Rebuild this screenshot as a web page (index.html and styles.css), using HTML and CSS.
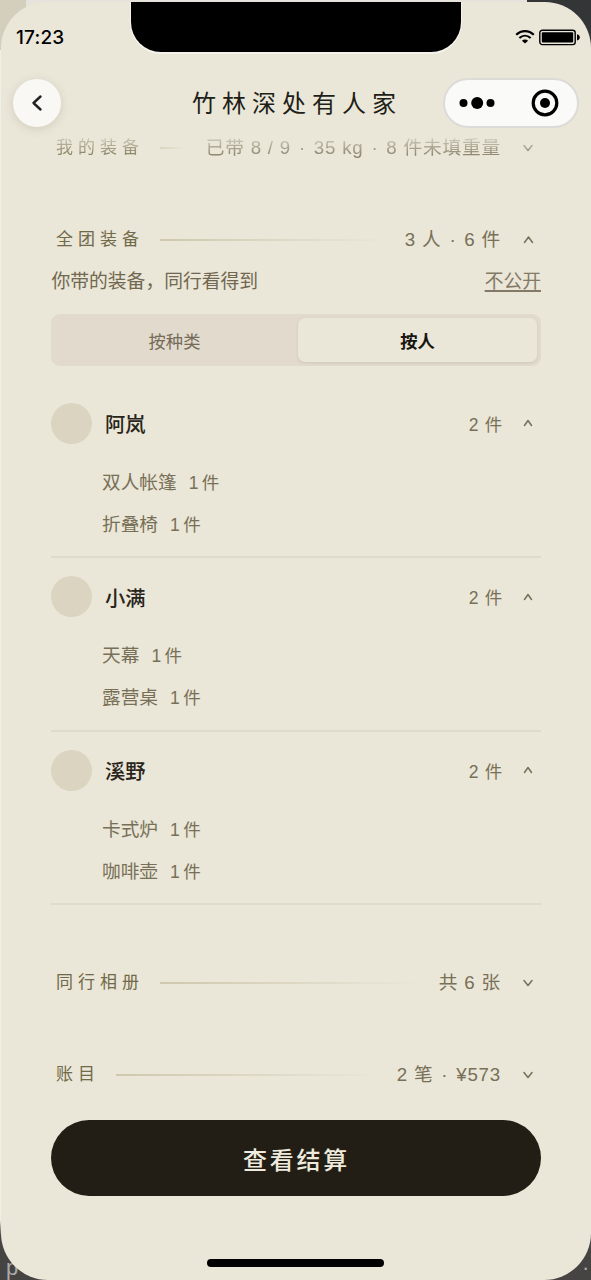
FILE: index.html
```html
<!DOCTYPE html>
<html lang="zh-CN">
<head>
<meta charset="utf-8">
<title>竹林深处有人家</title>
<link rel="stylesheet" href="styles.css">
</head>
<body>
<div class="backdrop-top"></div>
<span class="backdrop-text backdrop-name">小满</span>
<span class="backdrop-text backdrop-left">p</span>
<span class="backdrop-text backdrop-right">·</span>
<main class="phone">
  <div class="notch"></div>
  <header class="header">
    <div class="status">
      <span class="time">17:23</span>
      <span class="status-icons">
        <svg width="20" height="16" viewBox="0 0 20 16" fill="none" stroke="#000" stroke-width="2.2"><path d="M1.2 5.7C6.3.8 13.7.8 18.8 5.7"/><path d="M4.4 9c3.3-3 7.9-3 11.2 0"/><path d="M10 14.6 6.9 11.7c1.8-1.6 4.4-1.6 6.2 0z" fill="#000" stroke="none"/></svg>
        <svg width="42" height="17" viewBox="0 0 42 17"><rect x=".8" y="1.2" width="35.4" height="14.4" rx="2.6" fill="none" stroke="#000" stroke-width="1.4"/><rect x="2.8" y="3.2" width="31.4" height="10.4" rx="1" fill="#000"/><path d="M38 5.3c3.8 1 3.8 5.2 0 6.2z" fill="#000"/></svg>
      </span>
    </div>
    <div class="nav">
      <button class="back"><svg width="12" height="18" viewBox="0 0 12 18" fill="none" stroke="#222" stroke-width="2.4" stroke-linecap="round" stroke-linejoin="round"><path d="M9.500 2.500 2.500 9l7 6.500"/></svg></button>
      <h1 class="title">竹林深处有人家</h1>
      <div class="capsule">
        <svg width="134" height="48" viewBox="0 0 134 48"><circle cx="21.500" cy="24" r="4"/><circle cx="35.200" cy="24" r="6"/><circle cx="48.500" cy="24" r="4"/><circle cx="103" cy="24" r="11.800" fill="none" stroke="#000" stroke-width="3.200"/><circle cx="103" cy="24" r="5"/></svg>
      </div>
    </div>
  </header>
  <div class="content">
    <section class="row mine"><h2>我的装备</h2><i class="rule"></i><span class="value">已带 8 / 9 <span class="dot">·</span> 35 kg <span class="dot">·</span> 8 件未填重量</span><svg class="chev" viewBox="0 0 12 12"><path d="m2 3.500 4 5 4-5"/></svg></section>
    <section class="row group"><h2>全团装备</h2><i class="rule"></i><span class="value">3 人 <span class="dot">·</span> 6 件</span><svg class="chev" viewBox="0 0 12 12"><path d="m2.500 8.500 4-5.500 4 5.500"/></svg></section>
    <div class="note"><span>你带的装备，同行看得到</span><a class="private">不公开</a></div>
    <div class="tabs"><span class="tab">按种类</span><span class="tab active">按人</span></div>
    <section class="person">
      <div class="person-head"><i class="avatar"></i><b>阿岚</b><span class="count">2 件</span><svg class="chev small" viewBox="0 0 12 12"><path d="m2.500 8.500 3.500-5 3.500 5"/></svg></div>
      <div class="item">双人帐篷<small>1 件</small></div>
      <div class="item">折叠椅<small>1 件</small></div>
    </section>
    <section class="person">
      <div class="person-head"><i class="avatar"></i><b>小满</b><span class="count">2 件</span><svg class="chev small" viewBox="0 0 12 12"><path d="m2.500 8.500 3.500-5 3.500 5"/></svg></div>
      <div class="item">天幕<small>1 件</small></div>
      <div class="item">露营桌<small>1 件</small></div>
    </section>
    <section class="person">
      <div class="person-head"><i class="avatar"></i><b>溪野</b><span class="count">2 件</span><svg class="chev small" viewBox="0 0 12 12"><path d="m2.500 8.500 3.500-5 3.500 5"/></svg></div>
      <div class="item">卡式炉<small>1 件</small></div>
      <div class="item">咖啡壶<small>1 件</small></div>
    </section>
    <section class="row album"><h2>同行相册</h2><i class="rule"></i><span class="value">共 6 张</span><svg class="chev" viewBox="0 0 12 12"><path d="m2 3.500 4 5 4-5"/></svg></section>
    <section class="row bill"><h2>账目</h2><i class="rule"></i><span class="value">2 笔 <span class="dot">·</span> ¥573</span><svg class="chev" viewBox="0 0 12 12"><path d="m2 3.500 4 5 4-5"/></svg></section>
    <button class="settle">查看结算</button>
  </div>
  <div class="home"></div>
</main>
</body>
</html>
```
FILE: styles.css
```css
* { box-sizing: border-box; }
body {
  margin: 0;
  width: 591px;
  height: 1280px;
  padding: 2px 0 0 1px;
  position: relative;
  overflow: hidden;
  background: linear-gradient(#343537 0 50px, #f1efe6 50px 1220px, #454443 1236px);
  font-family: "Liberation Sans", "Noto Sans CJK SC", sans-serif;
}
.backdrop-top {
  position: absolute;
  left: 0;
  top: 0;
  width: 527px;
  height: 50px;
  background: linear-gradient(90deg, #d4cebd 0 26px, #e5e3dc 26px);
}
.backdrop-text { position: absolute; color: #aaa; font: 22px/26px "Liberation Sans", "Noto Sans CJK SC", sans-serif; }
.backdrop-name { left: 46px; top: -21px; font-size: 17px; color: #57534a; }
.backdrop-left { left: 6px; top: 1255px; }
.backdrop-right { left: 582px; top: 1255px; }
.phone {
  position: relative;
  width: 590px;
  height: 1278px;
  border-radius: 46px 46px 47px 47px;
  background: #eae6d8;
  overflow: hidden;
}
.notch {
  position: absolute;
  left: 130px;
  top: 0;
  width: 330px;
  height: 50px;
  border-radius: 0 0 30px 30px;
  background: #000;
  box-shadow: 0 1px 0 1px #f5f3ec;
}
.header { height: 131px; }
.status { height: 70px; padding: 0 10px 0 15px; display: flex; align-items: center; justify-content: space-between; }
.time { font: 500 19px/24px Inter, sans-serif; letter-spacing: .2px; padding-top: 1px; }
.status-icons { display: flex; align-items: center; gap: 4px; }
.nav { height: 62px; padding: 0 11px 0 12px; display: flex; align-items: center; }
.back { width: 48px; height: 48px; border: 0; border-radius: 50%; background: #f9f8f5; display: grid; place-items: center; box-shadow: 0 2px 9px #918a7040; padding: 0; }
.title { margin: 0 0 0 131px; padding-top: 1px; width: 251px; font-size: 24px; line-height: 34px; font-weight: 400; letter-spacing: 6px; color: #211e17; white-space: nowrap; }
.capsule { width: 136px; height: 50px; border: 2px solid #dcdbd8; border-radius: 25px; background: #fafaf8; flex: none; }
.capsule svg { display: block; margin-left: -3px; margin-top: -1px; }
.content { padding: 0 50px; }
.row { display: flex; align-items: center; height: 30px; padding: 0 7px 0 5px; color: #777057; }
.row h2 { margin: 0; font-size: 17px; line-height: 28px; font-weight: 400; letter-spacing: 5px; color: #716947; }
.rule { flex: 1; height: 2px; margin: 0 21px 0 16px; background: linear-gradient(90deg, #cfc8ae, #cfc8ae00); }
.value { font-size: 18.7px; line-height: 28px; letter-spacing: .8px; white-space: nowrap; }
.dot { padding: 0 1.9px; }
.chev { width: 12px; height: 12px; margin-left: 21px; fill: none; stroke: #777057; stroke-width: 1.5; stroke-linecap: round; stroke-linejoin: round; }
.mine { -webkit-mask-image: linear-gradient(#0003 4px, #000e 26px); mask-image: linear-gradient(#0003 4px, #000e 26px); }
.group { margin-top: 62px; }
.note { display: flex; justify-content: space-between; align-items: center; height: 28px; margin-top: 10px; padding-left: .5px; font-size: 18.8px; color: #71684f; }
.private { text-decoration: underline; text-decoration-thickness: 1.5px; text-underline-offset: 2px; color: #837966; }
.tabs { display: flex; height: 52px; margin-top: 21px; padding: 4px; border-radius: 9px; background: #e1dacd; }
.tab { flex: 1; display: grid; place-items: center; font-size: 17.3px; color: #756b58; }
.tab:first-child { padding-right: 2px; }
.tab.active { margin-left: 2px; font-weight: 700; color: #17150f; background: #eae6d8; border-radius: 7px; box-shadow: 0 1px 3px #b9b09b66; }
.person { height: 173.5px; border-bottom: 2px solid #dfdacb; }
.tabs + .person { margin-top: 18.5px; }
.person-head { display: flex; align-items: center; height: 77px; padding-right: 7px; }
.avatar { width: 41px; height: 41px; border-radius: 50%; background: #dbd4c1; margin-right: 13px; }
.person-head b { padding-top: 4px; font-size: 20.3px; line-height: 28px; font-weight: 500; color: #282419; }
.count { margin-left: auto; font-size: 17.5px; letter-spacing: .7px; color: #777057; }
.chev.small { margin-left: 19px; }
.item { height: 42px; padding-left: 51px; font-size: 18.7px; line-height: 42px; color: #777057; }
.item small { font-size: 17.5px; margin-left: 12px; word-spacing: -1.5px; }
.album { margin-top: 63px; }
.bill { margin-top: 62px; }
.settle { display: block; width: 490px; height: 76px; margin-top: 30px; padding: 0 0 0 1px; border: 0; border-radius: 38px; background: #221e16; color: #eeeadd; font: 500 24px "Noto Sans CJK SC", sans-serif; letter-spacing: 2.7px; }
.home { width: 177px; height: 8px; margin: 63px 0 0 206px; border-radius: 4px; background: #000; }
```
